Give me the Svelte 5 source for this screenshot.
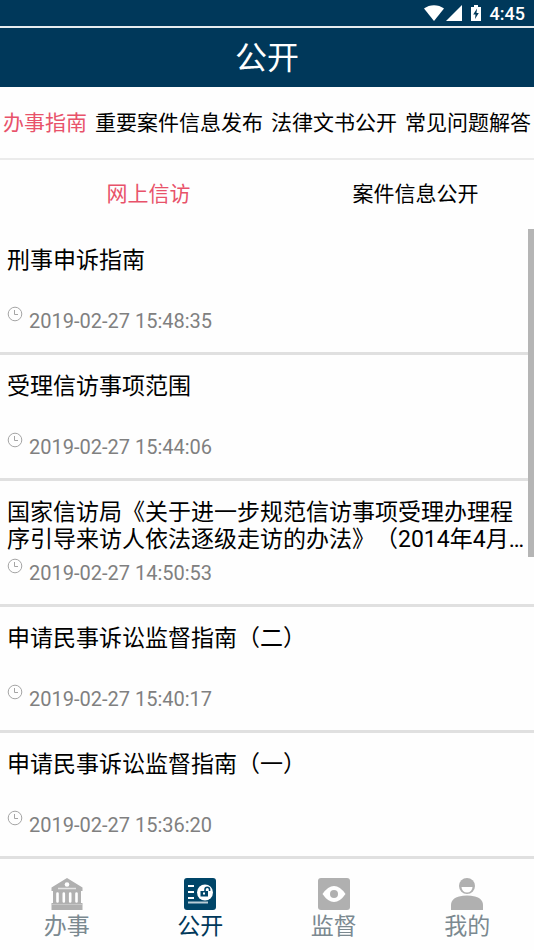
<script lang="ts">
    type Article = { title: string; time: string };

    const tabs = ["办事指南", "重要案件信息发布", "法律文书公开", "常见问题解答"];
    const subTabs = ["网上信访", "案件信息公开"];

    const articles: Article[] = [
        { title: "刑事申诉指南", time: "2019-02-27 15:48:35" },
        { title: "受理信访事项范围", time: "2019-02-27 15:44:06" },
        { title: "国家信访局《关于进一步规范信访事项受理办理程序引导来访人依法逐级走访的办法》（2014年4月…", time: "2019-02-27 14:50:53" },
        { title: "申请民事诉讼监督指南（二）", time: "2019-02-27 15:40:17" },
        { title: "申请民事诉讼监督指南（一）", time: "2019-02-27 15:36:20" },
    ];

    const navItems = [
        { id: "work", label: "办事" },
        { id: "open", label: "公开" },
        { id: "watch", label: "监督" },
        { id: "mine", label: "我的" },
    ];

    let activeTab = $state(0);
    let activeSubTab = $state(0);
    let activeNav = $state("open");
</script>


<div class="app">
    <div class="status">
        <svg width="20" height="16" viewBox="0 0 20 16" aria-hidden="true">
            <path d="M0 3.6C5.5-1 14.500-1 20 3.600L10 16z" fill="#fff" />
        </svg>
        <svg width="16" height="16" viewBox="0 0 16 16" aria-hidden="true">
            <path d="M16 0v16H0z" fill="#fff" />
        </svg>
        <svg class="battery" width="10" height="16" viewBox="0 0 10 16" aria-hidden="true">
            <path d="M3 0h4v2h3v14H0V2h3z" fill="#fff" />
            <path d="M6 3.500 2.200 9.500h2.300L4 14l3.800-6H5.500z" fill="#00385a" />
        </svg>
        <span>4:45</span>
    </div>

    <header>
        <h1>公开</h1>
    </header>

    <div class="tabs">
        {#each tabs as tab, i}
            <button class:active={activeTab === i} onclick={() => (activeTab = i)}>{tab}</button>
        {/each}
    </div>

    <div class="sub-tabs">
        {#each subTabs as tab, i}
            <button class:active={activeSubTab === i} onclick={() => (activeSubTab = i)}>{tab}</button>
        {/each}
    </div>

    <main>
        <ul>
            {#each articles as article}
                <li>
                    <a href="#article">
                        <h2>{article.title}</h2>
                        <div class="time">
                            <svg width="16" height="16" viewBox="0 0 16 16" fill="none" aria-hidden="true">
                                <circle cx="8" cy="8" r="6.800" stroke="#a5a5a5" />
                                <path d="M7.500 4v4.500H11" stroke="#a5a5a5" />
                            </svg>
                            <time>{article.time}</time>
                        </div>
                    </a>
                </li>
            {/each}
        </ul>
        <div class="scrollbar"></div>
    </main>

    <nav>
        {#each navItems as item}
            <button class:active={activeNav === item.id} onclick={() => (activeNav = item.id)}>
                <svg width="32" height="32" viewBox="0 0 32 32" aria-hidden="true">
                    {#if item.id === "work"}
                        <path d="M16 0 31.500 9.500V13H30v12h1.500v7H.500v-7H2V13H.500V9.500z" fill="#b0b0b0" />
                        <circle cx="16" cy="6.500" r="2.300" fill="#fff" />
                        <path d="M7 10.500h18" stroke="#e4e4e4" stroke-width="1.500" />
                        <path d="M6.500 15.500v8M12.800 15.500v8M19.200 15.500v8M25.500 15.500v8" stroke="#fff" stroke-width="2.600" stroke-linecap="round" />
                        <path d="M1 26.500h30" stroke="#c6c6c6" />
                    {:else if item.id === "open"}
                        <rect width="32" height="32" rx="3" fill="#004568" />
                        <path d="M4 8h6M4 14h6M4 20h6" stroke="#fff" stroke-width="1.800" />
                        <path d="M4 24.500h20" stroke="#b9cdd7" stroke-width="2" />
                        <circle cx="21" cy="14.500" r="8" fill="#fff" />
                        <rect x="16.500" y="13" width="7.500" height="5.500" fill="#004568" />
                        <path d="M21 13v-1.500a2.300 2.300 0 0 1 4.600 0V13" fill="none" stroke="#004568" stroke-width="1.600" />
                        <rect x="19" y="14.500" width="2" height="2" fill="#fff" />
                    {:else if item.id === "watch"}
                        <rect width="32" height="32" rx="3" fill="#b0b0b0" />
                        <path d="M4.500 16Q10 8 16 8T27.500 16Q22 24 16 24T4.500 16z" fill="#fff" />
                        <circle cx="16" cy="16" r="4" fill="#b0b0b0" />
                    {:else}
                        <circle cx="16" cy="8" r="8" fill="#b0b0b0" />
                        <path d="M10.500 9h11a5.500 5.500 0 0 1-11 0z" fill="#fff" />
                        <path d="M0 32v-5c0-5 4-7.500 8-8.500q8-2 16 0c4 1 8 3.500 8 8.500v5z" fill="#b0b0b0" />
                    {/if}
                </svg>
                <span>{item.label}</span>
            </button>
        {/each}
    </nav>
</div>


<style>
    .app {
        display: flex;
        flex-direction: column;
        min-height: 100vh;
        background: #fefefe;
        color: #000;
        font-family: Roboto, "Noto Sans CJK SC", sans-serif;
        text-spacing-trim: space-all;
    }

    button {
        padding: 0;
        border: 0;
        background: none;
        color: inherit;
        font: inherit;
        white-space: nowrap;
        cursor: pointer;
    }

    .status {
        display: flex;
        align-items: center;
        gap: 2px;
        justify-content: flex-end;
        height: 26px;
        padding-right: 9px;
        border-bottom: 2px solid #e6ecef;
        background: #00385a;
        color: #fff;
        font-size: 18px;
        font-weight: 500;
    }

    .battery {
        margin: 0 7px;
    }

    header {
        padding-top: 2px;
        background: #00385a;
        color: #fff;
        text-align: center;
    }

    h1 {
        margin: 0;
        font-size: 32px;
        font-weight: 400;
        line-height: 57px;
    }

    .tabs {
        display: flex;
        justify-content: space-between;
        padding: 2px 3px 0;
        border-bottom: 2px solid #ebebeb;
        font-size: 21px;
        line-height: 69px;
    }

    .sub-tabs {
        display: grid;
        grid-template-columns: 1fr 1fr;
        font-size: 21px;
        line-height: 69px;
    }

    .sub-tabs button {
        padding-left: 30px;
    }

    .tabs .active,
    .sub-tabs .active {
        color: #e8526a;
    }

    main {
        position: relative;
        flex: 1;
    }

    ul {
        margin: 0;
        padding: 0;
        list-style: none;
    }

    li {
        border-bottom: 3px solid #e0e0e0;
    }

    li a {
        display: block;
        padding: 18px 7px 16px;
        color: inherit;
        text-decoration: none;
    }

    h2 {
        min-height: 54px;
        margin: 0;
        font-size: 23px;
        font-weight: 400;
        line-height: 27px;
    }

    .time {
        display: flex;
        align-items: flex-start;
        gap: 6px;
        padding-top: 5px;
        color: #808080;
        font-size: 20px;
        line-height: 30px;
    }

    /* thumb drawn over the right edge of the list */
    .scrollbar {
        position: absolute;
        top: 0;
        right: 0;
        width: 6px;
        height: 52%;
        background: #b5b5b5;
    }

    nav {
        display: grid;
        grid-template-columns: repeat(4, 1fr);
        padding: 18px 0 6px;
        color: #7b8990;
        font-size: 23px;
        line-height: 34px;
    }

    nav button {
        display: flex;
        flex-direction: column;
        align-items: center;
    }

    nav .active {
        color: #00385a;
    }
</style>
